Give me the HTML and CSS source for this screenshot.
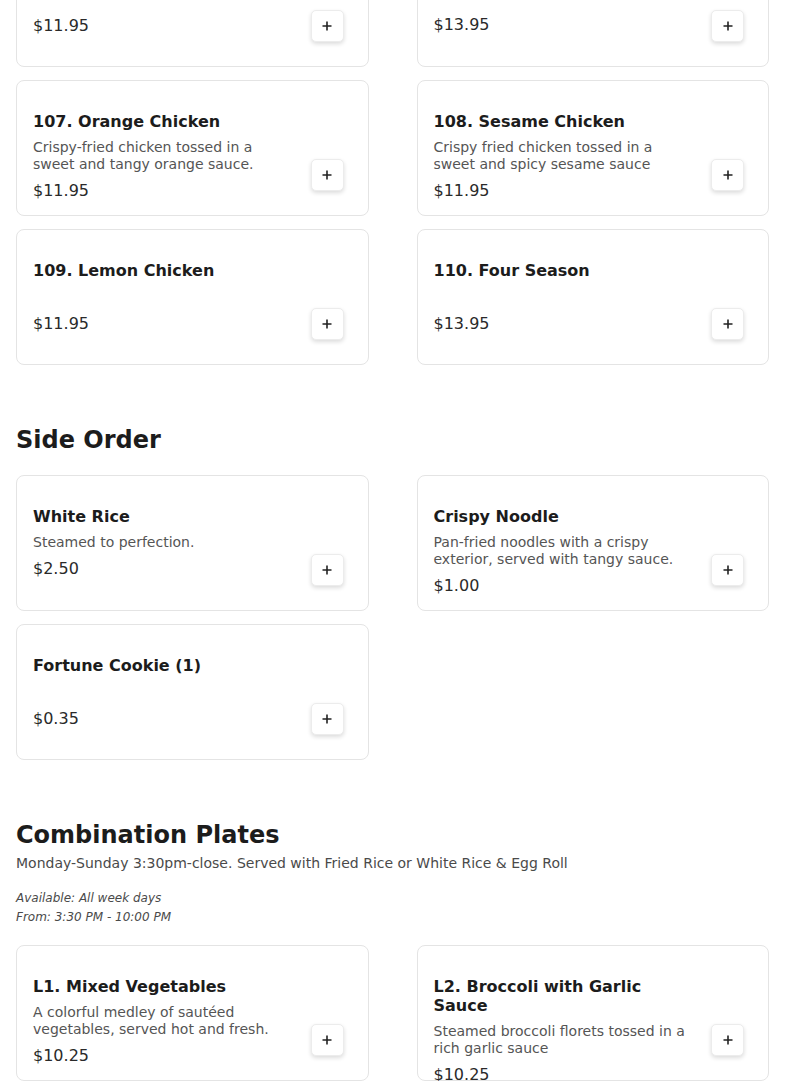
FILE: index.html
```html
<!DOCTYPE html>
<html>
<head>
<meta charset="utf-8">
<link rel="stylesheet" href="styles.css">
</head>
<body>
<div class="page">
  <section class="section first">
    <div class="grid">
      <div class="card">
        <div class="info">
          <h3 class="name">&nbsp;</h3>
          <p class="desc empty">&nbsp;</p>
          <div class="price">$11.95</div>
        </div>
        <button class="add" aria-label="Add"><svg viewBox="0 0 12 12" width="12" height="12"><path d="M6 1.5v9M1.5 6h9" stroke="#222" stroke-width="1.6" fill="none"/></svg></button>
      </div>
      <div class="card">
        <div class="info">
          <h3 class="name">&nbsp;</h3>
          <p class="desc">&nbsp;</p>
          <div class="price">$13.95</div>
        </div>
        <button class="add" aria-label="Add"><svg viewBox="0 0 12 12" width="12" height="12"><path d="M6 1.5v9M1.5 6h9" stroke="#222" stroke-width="1.6" fill="none"/></svg></button>
      </div>
      <div class="card">
        <div class="info">
          <h3 class="name">107. Orange Chicken</h3>
          <p class="desc">Crispy-fried chicken tossed in a sweet and tangy orange sauce.</p>
          <div class="price">$11.95</div>
        </div>
        <button class="add" aria-label="Add"><svg viewBox="0 0 12 12" width="12" height="12"><path d="M6 1.5v9M1.5 6h9" stroke="#222" stroke-width="1.6" fill="none"/></svg></button>
      </div>
      <div class="card">
        <div class="info">
          <h3 class="name">108. Sesame Chicken</h3>
          <p class="desc">Crispy fried chicken tossed in a sweet and spicy sesame sauce</p>
          <div class="price">$11.95</div>
        </div>
        <button class="add" aria-label="Add"><svg viewBox="0 0 12 12" width="12" height="12"><path d="M6 1.5v9M1.5 6h9" stroke="#222" stroke-width="1.6" fill="none"/></svg></button>
      </div>
      <div class="card">
        <div class="info">
          <h3 class="name">109. Lemon Chicken</h3>
          <p class="desc empty">&nbsp;</p>
          <div class="price">$11.95</div>
        </div>
        <button class="add" aria-label="Add"><svg viewBox="0 0 12 12" width="12" height="12"><path d="M6 1.5v9M1.5 6h9" stroke="#222" stroke-width="1.6" fill="none"/></svg></button>
      </div>
      <div class="card">
        <div class="info">
          <h3 class="name">110. Four Season</h3>
          <p class="desc empty">&nbsp;</p>
          <div class="price">$13.95</div>
        </div>
        <button class="add" aria-label="Add"><svg viewBox="0 0 12 12" width="12" height="12"><path d="M6 1.5v9M1.5 6h9" stroke="#222" stroke-width="1.6" fill="none"/></svg></button>
      </div>
    </div>
  </section>

  <section class="section">
    <h2 class="heading">Side Order</h2>
    <div class="grid">
      <div class="card">
        <div class="info">
          <h3 class="name">White Rice</h3>
          <p class="desc">Steamed to perfection.</p>
          <div class="price">$2.50</div>
        </div>
        <button class="add" aria-label="Add"><svg viewBox="0 0 12 12" width="12" height="12"><path d="M6 1.5v9M1.5 6h9" stroke="#222" stroke-width="1.6" fill="none"/></svg></button>
      </div>
      <div class="card">
        <div class="info">
          <h3 class="name">Crispy Noodle</h3>
          <p class="desc">Pan-fried noodles with a crispy exterior, served with tangy sauce.</p>
          <div class="price">$1.00</div>
        </div>
        <button class="add" aria-label="Add"><svg viewBox="0 0 12 12" width="12" height="12"><path d="M6 1.5v9M1.5 6h9" stroke="#222" stroke-width="1.6" fill="none"/></svg></button>
      </div>
      <div class="card">
        <div class="info">
          <h3 class="name">Fortune Cookie (1)</h3>
          <p class="desc empty">&nbsp;</p>
          <div class="price">$0.35</div>
        </div>
        <button class="add" aria-label="Add"><svg viewBox="0 0 12 12" width="12" height="12"><path d="M6 1.5v9M1.5 6h9" stroke="#222" stroke-width="1.6" fill="none"/></svg></button>
      </div>
    </div>
  </section>

  <section class="section">
    <h2 class="heading tight">Combination Plates</h2>
    <p class="subtitle">Monday-Sunday 3:30pm-close. Served with Fried Rice or White Rice &amp; Egg Roll</p>
    <div class="avail">
      <div>Available: All week days</div>
      <div>From: 3:30 PM - 10:00 PM</div>
    </div>
    <div class="grid">
      <div class="card">
        <div class="info">
          <h3 class="name">L1. Mixed Vegetables</h3>
          <p class="desc">A colorful medley of sautéed vegetables, served hot and fresh.</p>
          <div class="price">$10.25</div>
        </div>
        <button class="add" aria-label="Add"><svg viewBox="0 0 12 12" width="12" height="12"><path d="M6 1.5v9M1.5 6h9" stroke="#222" stroke-width="1.6" fill="none"/></svg></button>
      </div>
      <div class="card">
        <div class="info">
          <h3 class="name">L2. Broccoli with Garlic Sauce</h3>
          <p class="desc">Steamed broccoli florets tossed in a rich garlic sauce</p>
          <div class="price">$10.25</div>
        </div>
        <button class="add" aria-label="Add"><svg viewBox="0 0 12 12" width="12" height="12"><path d="M6 1.5v9M1.5 6h9" stroke="#222" stroke-width="1.6" fill="none"/></svg></button>
      </div>
    </div>
  </section>
</div>
</body>
</html>
```
FILE: styles.css
```css
* { box-sizing: border-box; }
html, body { margin: 0; padding: 0; background: #fff; }
body {
  font-family: "DejaVu Sans", "Verdana", sans-serif;
  color: #1c1c1c;
  overflow: hidden;
}
.page {
  padding: 0 16px;
  margin-top: -69px;
}
.section { margin-top: 60px; }
.section.first { margin-top: 0; }
.heading {
  margin: 0 0 19px 0;
  font-size: 24px;
  line-height: 31px;
  font-weight: bold;
  color: #1c1c1c;
}
.heading.tight { margin-bottom: 0; }
.subtitle {
  margin: 4px 0 0 0;
  font-size: 14px;
  line-height: 17px;
  color: #4a4a4a;
}
.avail {
  margin: 17px 0 18px 0;
  font-size: 12px;
  line-height: 19px;
  font-style: italic;
  color: #4a4a4a;
}
.grid {
  display: grid;
  grid-template-columns: 1fr 1fr;
  column-gap: 48px;
  row-gap: 13px;
}
.card {
  height: 136px;
  border: 1px solid #e4e4e4;
  border-radius: 8px;
  background: #fff;
  padding: 31px 16px 0 16px;
  display: flex;
  gap: 16px;
  align-items: flex-start;
}
.info { flex: 1; min-width: 0; }
.name {
  margin: 0;
  font-size: 16px;
  line-height: 19px;
  font-weight: bold;
  color: #1c1c1c;
}
.desc {
  margin: 8px 0 0 0;
  font-size: 14px;
  line-height: 17px;
  color: #555;
}
.desc.empty { height: 18px; }
.price {
  margin-top: 8px;
  font-size: 16px;
  line-height: 19px;
  color: #2a2a2a;
}
.add {
  flex: 0 0 auto;
  align-self: flex-end;
  width: 33px;
  height: 32px;
  margin: 0 8px 24px 0;
  padding: 0;
  border: 1px solid #ececec;
  border-radius: 5px;
  background: #fff;
  box-shadow: 0 2px 4px rgba(0,0,0,0.14);
  display: flex;
  align-items: center;
  justify-content: center;
  cursor: pointer;
}
.add svg { display: block; }
```
